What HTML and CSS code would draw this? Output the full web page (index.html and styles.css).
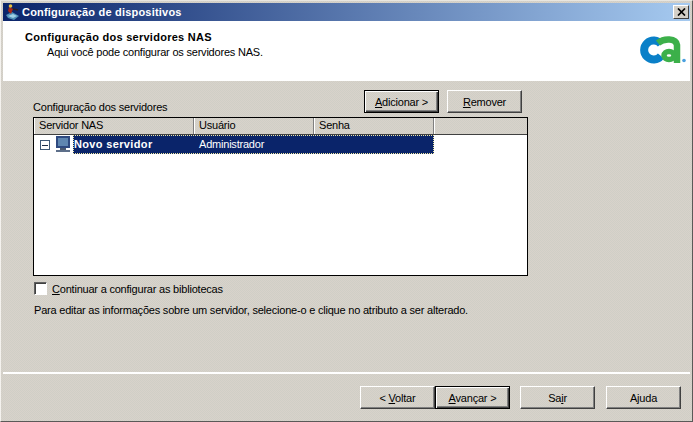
FILE: index.html
```html
<!DOCTYPE html>
<html lang="pt">
<head>
<meta charset="utf-8">
<title>Configuração de dispositivos</title>
<link rel="stylesheet" href="styles.css">
</head>
<body>
<div class="window">
  <div class="titlebar">
    <svg class="app-icon" width="15" height="17" viewBox="0 0 15 17">
      <path d="M1 11l6-3 7 4-5 4-6-2z" fill="#4f8fb8"/>
      <path d="M3 12l5-2 4 2-4 2z" fill="#9fd0e6"/>
      <path d="M4 3l4 2-2 5-3-3z" fill="#a82818"/>
      <circle cx="5.500" cy="2" r="1.800" fill="#e8c040"/>
      <path d="M8 5l5 1" stroke="#302020" stroke-width="1.500"/>
    </svg>
    <span class="title-text">Configuração de dispositivos</span>
    <span class="close">
      <svg width="9" height="8" viewBox="0 0 9 8"><path d="M1 0.500L8 7.500M8 0.500L1 7.500" stroke="#000" stroke-width="1.700" fill="none"/></svg>
    </span>
  </div>
  <header class="banner">
    <div class="banner-text">
      <h1 class="banner-title">Configuração dos servidores NAS</h1>
      <p class="banner-sub">Aqui você pode configurar os servidores NAS.</p>
    </div>
    <svg class="logo" width="48" height="30" viewBox="0 0 48 30">
      <path d="M23 9A9.500 9.500 0 1 0 23 21" fill="none" stroke="#0a80c8" stroke-width="8"/>
      <path d="M20 8C26 3 38 3 39 10V28" fill="none" stroke="#3cb04a" stroke-width="6.500"/>
      <ellipse cx="31" cy="20.500" rx="5" ry="4" fill="none" stroke="#3cb04a" stroke-width="5.500"/>
      <circle cx="46" cy="25.500" r="1.800" fill="#4aa0e0"/>
    </svg>
  </header>
  <main class="content">
    <div class="list-top">
      <span class="list-label">Configuração dos servidores</span>
      <div class="list-actions">
        <button class="btn btn-default" type="button"><u>A</u>dicionar &gt;</button>
        <button class="btn" type="button"><u>R</u>emover</button>
      </div>
    </div>
    <div class="tree">
      <div class="tree-head">
        <span class="col">Servidor NAS</span>
        <span class="col">Usuário</span>
        <span class="col">Senha</span>
        <span class="col"></span>
      </div>
      <div class="tree-row">
        <span class="expander"></span>
        <svg class="server-icon" width="16" height="17" viewBox="0 0 16 17">
          <rect x="1" y="0" width="14" height="12" fill="#2f4a80"/>
          <rect x="3" y="2" width="10" height="8" fill="#5f86b0"/>
          <rect x="5" y="12" width="6" height="2" fill="#4c5a70"/>
          <rect x="1" y="14" width="14" height="2" fill="#5d6f8a"/>
        </svg>
        <div class="row-cells">
          <span class="cell cell-name">Novo servidor</span>
          <span class="cell cell-user">Administrador</span>
          <span class="cell cell-pass"></span>
        </div>
      </div>
    </div>
    <label class="check-row">
      <span class="checkbox"></span>
      <span><u>C</u>ontinuar a configurar as bibliotecas</span>
    </label>
    <p class="hint">Para editar as informações sobre um servidor, selecione-o e clique no atributo a ser alterado.</p>
  </main>
  <footer class="footer">
    <button class="btn" type="button">&lt; <u>V</u>oltar</button>
    <button class="btn btn-default" type="button"><u>A</u>vançar &gt;</button>
    <button class="btn btn-exit" type="button">Sa<u>i</u>r</button>
    <button class="btn btn-help" type="button">Ajuda</button>
  </footer>
</div>
</body>
</html>
```

FILE: styles.css
```css
* { box-sizing: border-box; }
html, body { margin: 0; padding: 0; }
body {
  width: 693px;
  height: 422px;
  overflow: hidden;
  font-family: "Liberation Sans", Arial, sans-serif;
  font-size: 11px;
  letter-spacing: -0.21px;
  color: #000;
}
.window {
  width: 693px;
  height: 422px;
  display: flex;
  flex-direction: column;
  padding: 3px 2px 1px 2px;
  background-color: #d4d0c8;
  background-image: repeating-conic-gradient(#d9d2cb 0 25%, #cfcfc6 0 50%);
  background-size: 2px 2px;
  border-top: 1px solid #e8e6e0;
  border-left: 1px solid #f4f2ee;
  border-right: 1px solid #5a5a58;
  border-bottom: 1px solid #5a5a58;
}
.titlebar {
  height: 18px;
  margin-top: -1px;
  flex: none;
  display: flex;
  align-items: center;
  padding: 0 1px 0 2px;
  background: linear-gradient(to right, #0a246a, #a6caf0);
  color: #fff;
  font-weight: bold;
}
.app-icon { flex: none; margin-right: 2px; }
.title-text { flex: 1; letter-spacing: .2px; }
.close {
  width: 16px;
  height: 14px;
  display: flex;
  align-items: center;
  justify-content: center;
  background: #d4d0c8;
  border: 1px solid;
  border-color: #fff #404040 #404040 #fff;
}
.banner {
  height: 60px;
  flex: none;
  display: flex;
  justify-content: space-between;
  padding: 9px 4px 0 22px;
  background: #fff;
  border-bottom: 2px solid;
  border-image: linear-gradient(#808080 50%, #fff 50%) 2;
}
.banner-title { margin: 0; font-size: 11px; font-weight: bold; line-height: 14px; letter-spacing: .27px; }
.banner-sub { margin: 1px 0 0 22px; line-height: 14px; }
.logo { margin-top: 5px; }
.content {
  flex: 1;
  display: flex;
  flex-direction: column;
  padding: 9px 0 0 30px;
  border-bottom: 2px solid;
  border-image: linear-gradient(#808080 50%, #fff 50%) 2;
}
.list-top {
  width: 489px;
  height: 27px;
  flex: none;
  display: flex;
  justify-content: space-between;
}
.list-label { align-self: flex-end; line-height: 13px; margin-bottom: 3px; }
.list-actions { display: flex; gap: 8px; }
.btn {
  width: 75px;
  height: 23px;
  padding: 0;
  font: inherit;
  letter-spacing: inherit;
  color: #000;
  background: transparent;
  border: 1px solid;
  border-color: #fff #404040 #404040 #fff;
  box-shadow: inset -1px -1px 0 #808080;
}
.btn-default {
  border: 1px solid #000;
  box-shadow: inset 1px 1px 0 #fff, inset -1px -1px 0 #404040, inset -2px -2px 0 #808080;
}
.tree {
  width: 495px;
  height: 159px;
  flex: none;
  background: #fff;
  border: 1px solid #000;
}
.tree-head {
  height: 17px;
  display: grid;
  grid-template-columns: 160px 120px 120px 1fr;
  background-color: #d4d0c8;
  background-image: repeating-conic-gradient(#d9d2cb 0 25%, #cfcfc6 0 50%);
  background-size: 2px 2px;
  border-bottom: 1px solid #404040;
}
.col {
  padding: 1px 0 0 5px;
  line-height: 13px;
  border-right: 1px solid #808080;
  box-shadow: inset 1px 0 0 #fff;
}
.col:last-child { border-right: 0; }
.tree-row {
  height: 19px;
  display: flex;
  align-items: center;
  padding-left: 6px;
}
.expander {
  flex: none;
  width: 10px;
  height: 10px;
  margin-top: 1px;
  border: 1px solid #405a78;
  background: linear-gradient(#20304a, #20304a) center / 6px 1px no-repeat;
}
.server-icon { flex: none; margin: 0 2px 0 5px; }
.row-cells {
  display: grid;
  grid-template-columns: 121px 120px 120px;
  height: 19px;
  background: #0a246a;
  color: #fff;
  outline: 1px dotted #f0e8a0;
  outline-offset: -1px;
}
.cell { line-height: 19px; }
.cell-name { padding-left: 1px; font-weight: bold; letter-spacing: .35px; }
.cell-user { padding-left: 5px; }
.check-row {
  display: flex;
  align-items: center;
  gap: 5px;
  height: 13px;
  margin: 6px 0 0 1px;
}
.checkbox {
  flex: none;
  width: 13px;
  height: 13px;
  background: #fff;
  border: 1px solid;
  border-color: #606060 #fff #fff #606060;
  box-shadow: inset 1px 1px 0 #404040;
}
.hint { margin: 9px 0 0 1px; line-height: 13px; }
.footer {
  height: 46px;
  flex: none;
  display: flex;
  padding: 12px 0 0 357px;
}
.btn-exit { margin-left: 10px; }
.btn-help { margin-left: 11px; }
```
